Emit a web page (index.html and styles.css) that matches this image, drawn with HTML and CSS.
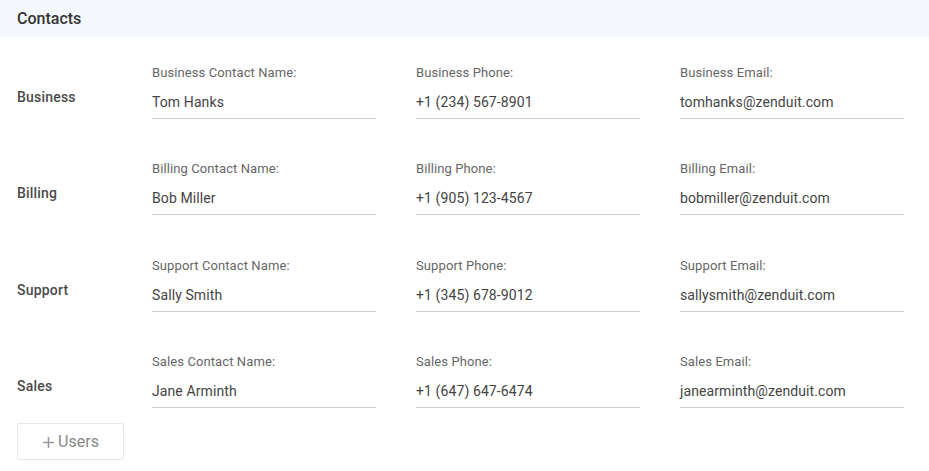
FILE: index.html
```html
<!DOCTYPE html>
<html>
<head>
<meta charset="utf-8">
<link rel="stylesheet" href="styles.css">
</head>
<body>
<div class="panel">
  <div class="panel-header">Contacts</div>
  <div class="rows">
    <div class="row">
      <div class="row-label">Business</div>
      <div class="field"><div class="field-label">Business Contact Name:</div><div class="field-value">Tom Hanks</div></div>
      <div class="field"><div class="field-label">Business Phone:</div><div class="field-value">+1 (234) 567-8901</div></div>
      <div class="field"><div class="field-label">Business Email:</div><div class="field-value">tomhanks@zenduit.com</div></div>
    </div>
    <div class="row">
      <div class="row-label">Billing</div>
      <div class="field"><div class="field-label">Billing Contact Name:</div><div class="field-value">Bob Miller</div></div>
      <div class="field"><div class="field-label">Billing Phone:</div><div class="field-value">+1 (905) 123-4567</div></div>
      <div class="field"><div class="field-label">Billing Email:</div><div class="field-value">bobmiller@zenduit.com</div></div>
    </div>
    <div class="row">
      <div class="row-label">Support</div>
      <div class="field"><div class="field-label">Support Contact Name:</div><div class="field-value">Sally Smith</div></div>
      <div class="field"><div class="field-label">Support Phone:</div><div class="field-value">+1 (345) 678-9012</div></div>
      <div class="field"><div class="field-label">Support Email:</div><div class="field-value">sallysmith@zenduit.com</div></div>
    </div>
    <div class="row">
      <div class="row-label">Sales</div>
      <div class="field"><div class="field-label">Sales Contact Name:</div><div class="field-value">Jane Arminth</div></div>
      <div class="field"><div class="field-label">Sales Phone:</div><div class="field-value">+1 (647) 647-6474</div></div>
      <div class="field"><div class="field-label">Sales Email:</div><div class="field-value">janearminth@zenduit.com</div></div>
    </div>
  </div>
  <div class="actions">
    <button class="add-btn"><svg class="plus" width="13" height="13" viewBox="0 0 13 13"><path d="M6.5 1v11M1 6.5h11" stroke="#9a9a9a" stroke-width="1.6" fill="none"/></svg>Users</button>
  </div>
</div>
</body>
</html>
```

FILE: styles.css
```css
html, body {
  margin: 0;
  padding: 0;
  background: #ffffff;
  font-family: Roboto, "Liberation Sans", Arial, sans-serif;
}

.panel {
  width: 929px;
}

.panel-header {
  height: 37px;
  line-height: 37px;
  background: #f4f8fc;
  padding-left: 17px;
  font-size: 16px;
  font-weight: 500;
  color: #333333;
}

.rows {
  display: flex;
  flex-direction: column;
  gap: 42.33px;
  padding-top: 28px;
}

.row {
  display: grid;
  grid-template-columns: 95px 224px 224px 224px;
  column-gap: 40px;
  padding-left: 17px;
}

.row-label {
  padding-top: 22px;
  line-height: 20px;
  font-size: 14px;
  font-weight: 500;
  letter-spacing: 0.2px;
  color: #4a4a4a;
}

.field {
  display: flex;
  flex-direction: column;
  border-bottom: 1px solid #d0d0d0;
}

.field-label {
  font-size: 13px;
  line-height: 16px;
  letter-spacing: 0.1px;
  color: #666666;
  margin-bottom: 11px;
}

.field-value {
  font-size: 14px;
  line-height: 20px;
  letter-spacing: 0.1px;
  color: #444444;
  padding-bottom: 6px;
}

.actions {
  padding: 15px 0 0 17px;
}

.add-btn {
  display: flex;
  align-items: center;
  justify-content: center;
  gap: 3px;
  width: 107px;
  height: 37px;
  background: #ffffff;
  border: 1px solid #e6e6e6;
  border-radius: 2px;
  font-family: Roboto, "Liberation Sans", Arial, sans-serif;
  font-size: 16px;
  color: #888888;
  padding: 0;
  cursor: pointer;
}

.plus {
  display: block;
  margin-top: 2px;
}
```
